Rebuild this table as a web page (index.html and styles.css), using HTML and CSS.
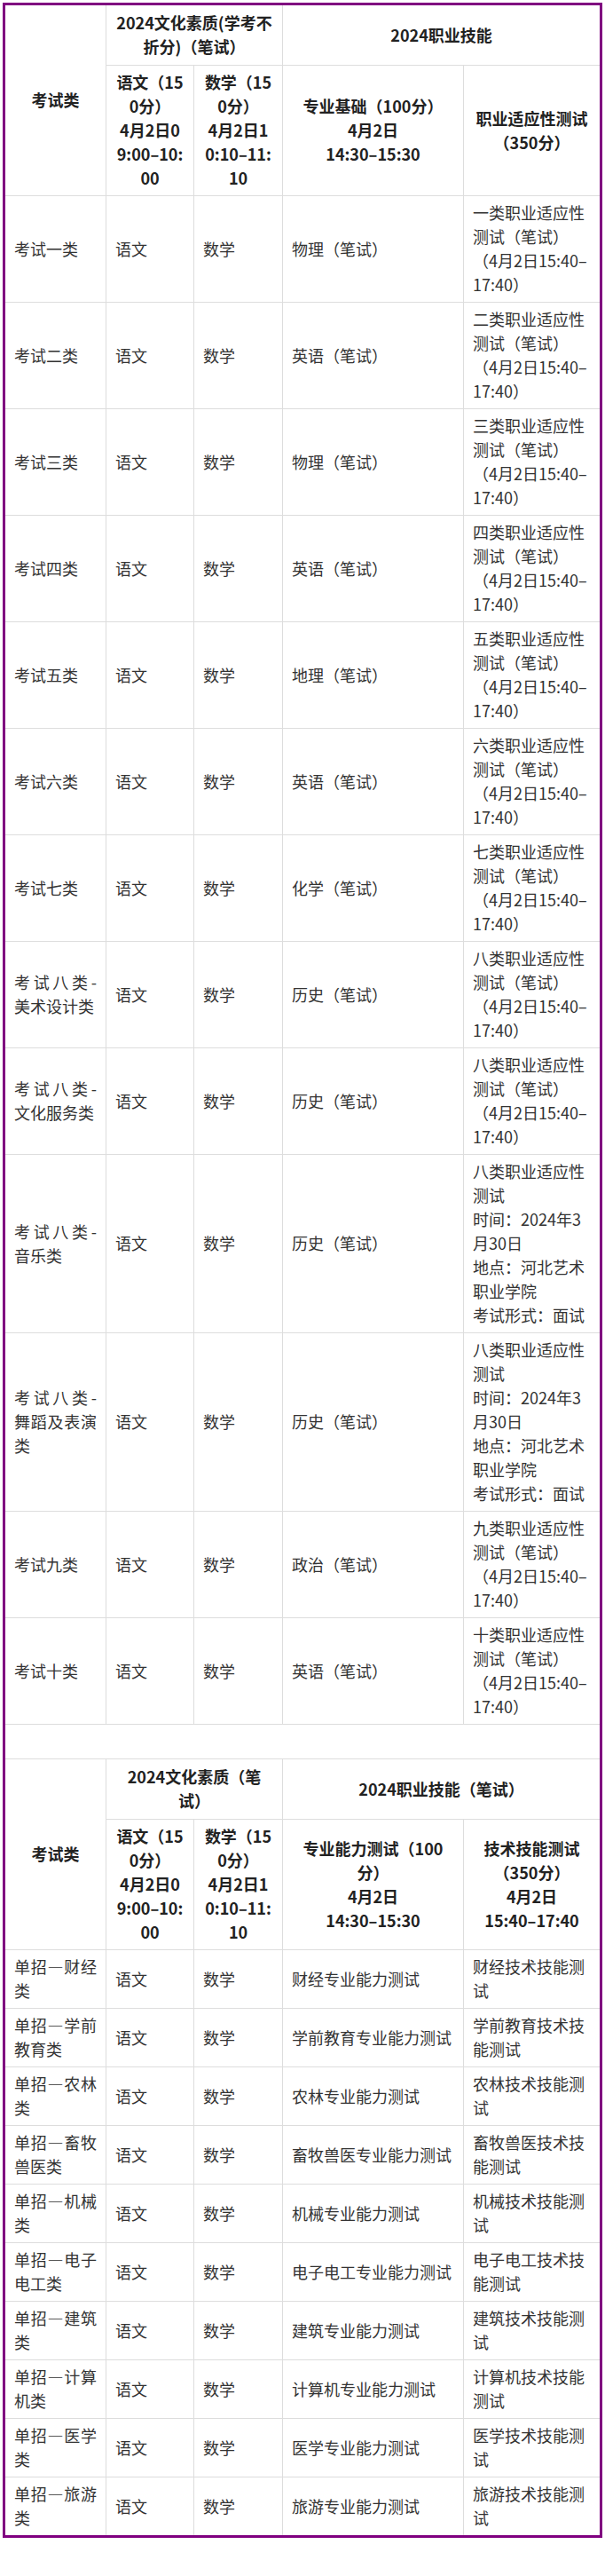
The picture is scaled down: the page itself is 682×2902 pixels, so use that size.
FILE: index.html
```html
<!DOCTYPE html>
<html lang="zh-CN">
<head>
<meta charset="utf-8">
<title>2024考试安排</title>
<link rel="stylesheet" href="styles.css">
</head>
<body>
<div class="page">
<table class="exam">
<colgroup>
<col class="c1"><col class="c2"><col class="c3"><col class="c4"><col class="c5">
</colgroup>
<tbody>
<tr class="head1">
<th rowspan="2">考试类</th>
<th colspan="2">2024文化素质(学考不折分)（笔试）</th>
<th colspan="2">2024职业技能</th>
</tr>
<tr>
<th>语文（150分）<br>4月2日09:00–10:00</th>
<th>数学（150分）<br>4月2日10:10–11:10</th>
<th>专业基础（100分）<br>4月2日<br>14:30–15:30</th>
<th>职业适应性测试（350分）</th>
</tr>
<tr><td>考试一类</td><td>语文</td><td>数学</td><td>物理（笔试）</td><td>一类职业适应性测试（笔试）（4月2日15:40–17:40）</td></tr>
<tr><td>考试二类</td><td>语文</td><td>数学</td><td>英语（笔试）</td><td>二类职业适应性测试（笔试）（4月2日15:40–17:40）</td></tr>
<tr><td>考试三类</td><td>语文</td><td>数学</td><td>物理（笔试）</td><td>三类职业适应性测试（笔试）（4月2日15:40–17:40）</td></tr>
<tr><td>考试四类</td><td>语文</td><td>数学</td><td>英语（笔试）</td><td>四类职业适应性测试（笔试）（4月2日15:40–17:40）</td></tr>
<tr><td>考试五类</td><td>语文</td><td>数学</td><td>地理（笔试）</td><td>五类职业适应性测试（笔试）（4月2日15:40–17:40）</td></tr>
<tr><td>考试六类</td><td>语文</td><td>数学</td><td>英语（笔试）</td><td>六类职业适应性测试（笔试）（4月2日15:40–17:40）</td></tr>
<tr><td>考试七类</td><td>语文</td><td>数学</td><td>化学（笔试）</td><td>七类职业适应性测试（笔试）（4月2日15:40–17:40）</td></tr>
<tr><td>考试八类-美术设计类</td><td>语文</td><td>数学</td><td>历史（笔试）</td><td>八类职业适应性测试（笔试）（4月2日15:40–17:40）</td></tr>
<tr><td>考试八类-文化服务类</td><td>语文</td><td>数学</td><td>历史（笔试）</td><td>八类职业适应性测试（笔试）（4月2日15:40–17:40）</td></tr>
<tr><td>考试八类-音乐类</td><td>语文</td><td>数学</td><td>历史（笔试）</td><td>八类职业适应性测试<br>时间：2024年3月30日<br>地点：河北艺术职业学院<br>考试形式：面试</td></tr>
<tr><td>考试八类-舞蹈及表演类</td><td>语文</td><td>数学</td><td>历史（笔试）</td><td>八类职业适应性测试<br>时间：2024年3月30日<br>地点：河北艺术职业学院<br>考试形式：面试</td></tr>
<tr><td>考试九类</td><td>语文</td><td>数学</td><td>政治（笔试）</td><td>九类职业适应性测试（笔试）（4月2日15:40–17:40）</td></tr>
<tr><td>考试十类</td><td>语文</td><td>数学</td><td>英语（笔试）</td><td>十类职业适应性测试（笔试）（4月2日15:40–17:40）</td></tr>
<tr class="gap"><td colspan="5">&nbsp;</td></tr>
<tr class="head1">
<th rowspan="2">考试类</th>
<th colspan="2">2024文化素质（笔试）</th>
<th colspan="2">2024职业技能（笔试）</th>
</tr>
<tr>
<th>语文（150分）<br>4月2日09:00–10:00</th>
<th>数学（150分）<br>4月2日10:10–11:10</th>
<th>专业能力测试（100分）<br>4月2日<br>14:30–15:30</th>
<th>技术技能测试（350分）<br>4月2日<br>15:40–17:40</th>
</tr>
<tr><td>单招—财经类</td><td>语文</td><td>数学</td><td>财经专业能力测试</td><td>财经技术技能测试</td></tr>
<tr><td>单招—学前教育类</td><td>语文</td><td>数学</td><td>学前教育专业能力测试</td><td>学前教育技术技能测试</td></tr>
<tr><td>单招—农林类</td><td>语文</td><td>数学</td><td>农林专业能力测试</td><td>农林技术技能测试</td></tr>
<tr><td>单招—畜牧兽医类</td><td>语文</td><td>数学</td><td>畜牧兽医专业能力测试</td><td>畜牧兽医技术技能测试</td></tr>
<tr><td>单招—机械类</td><td>语文</td><td>数学</td><td>机械专业能力测试</td><td>机械技术技能测试</td></tr>
<tr><td>单招—电子电工类</td><td>语文</td><td>数学</td><td>电子电工专业能力测试</td><td>电子电工技术技能测试</td></tr>
<tr><td>单招—建筑类</td><td>语文</td><td>数学</td><td>建筑专业能力测试</td><td>建筑技术技能测试</td></tr>
<tr><td>单招—计算机类</td><td>语文</td><td>数学</td><td>计算机专业能力测试</td><td>计算机技术技能测试</td></tr>
<tr><td>单招—医学类</td><td>语文</td><td>数学</td><td>医学专业能力测试</td><td>医学技术技能测试</td></tr>
<tr><td>单招—旅游类</td><td>语文</td><td>数学</td><td>旅游专业能力测试</td><td>旅游技术技能测试</td></tr>
</tbody>
</table>
</div>
</body>
</html>
```

FILE: styles.css
```css
html, body {
  margin: 0;
  padding: 0;
  background: #ffffff;
}

body {
  font-family: "Noto Sans CJK SC", "Microsoft YaHei", sans-serif;
  color: #333333;
}

.page {
  padding: 3px;
}

.exam {
  width: 676px;
  border-collapse: collapse;
  table-layout: fixed;
  border: 3px solid #800080;
  font-size: 18px;
  line-height: 27px;
  text-spacing-trim: space-all;
}

.exam col.c1 { width: 115px; }
.exam col.c2 { width: 99px; }
.exam col.c3 { width: 100px; }
.exam col.c4 { width: 204px; }
.exam col.c5 { width: 155px; }

.exam th,
.exam td {
  border: 1px solid #dddddd;
  padding: 5px 10px 6px;
  vertical-align: middle;
  text-align: left;
}

.exam td:first-child {
  text-align: justify;
}

.exam th {
  font-weight: bold;
  text-align: center;
  color: #222222;
  word-break: break-all;
}

.exam .head1 th {
  padding-top: 6px;
  padding-bottom: 7px;
}
```
